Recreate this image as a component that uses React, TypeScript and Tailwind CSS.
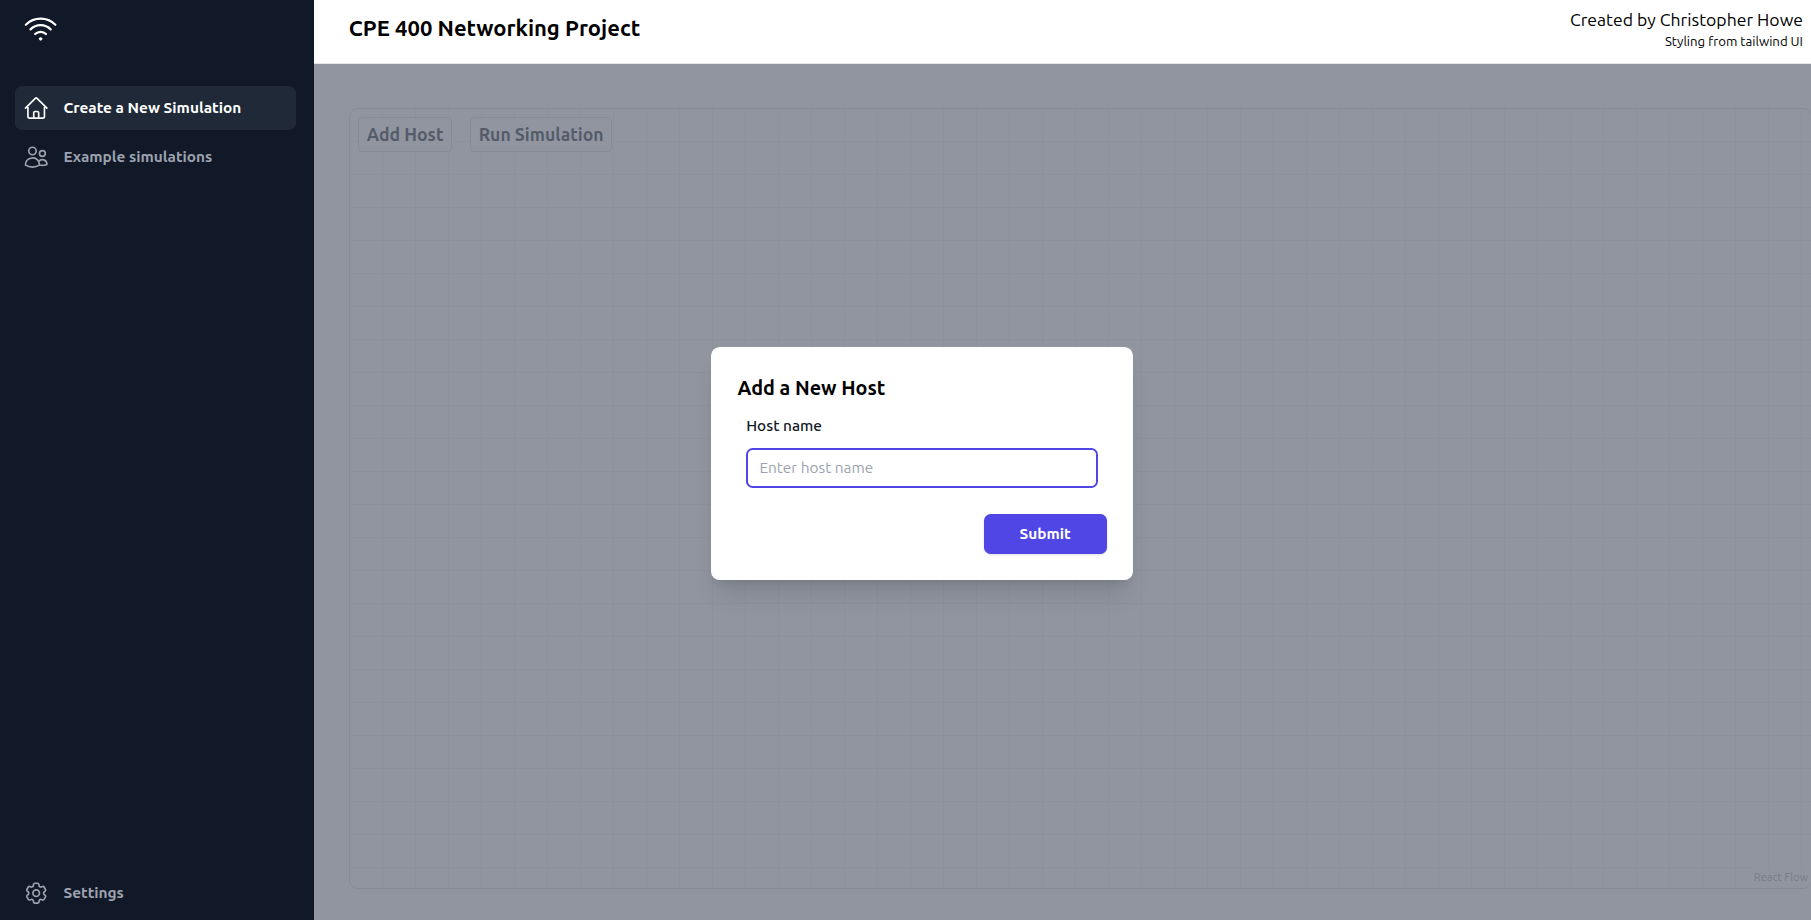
import type { ReactNode } from 'react';
import { HiOutlineWifi, HiOutlineHome, HiOutlineUsers, HiOutlineCog6Tooth } from 'react-icons/hi2';

function NavItem({ icon, label, active }: { icon: ReactNode; label: string; active?: boolean }) {
  return (
    <a
      className={
        'flex items-center gap-[14px] rounded-[6.6px] py-[8.8px] pl-2 text-[15.4px] leading-[26.4px] font-semibold ' +
        (active ? 'bg-[#1f2937] text-white' : 'text-[#9ca3af]')
      }
    >
      {icon}
      <span>{label}</span>
    </a>
  );
}

function Sidebar() {
  return (
    <nav className="flex w-[314px] shrink-0 flex-col bg-[#111827] pr-[18px] pl-[15px] pb-[4.4px]">
      <div className="flex h-[86px] items-start pt-[11.5px] pl-[8.2px]">
        <HiOutlineWifi className="size-[35.2px] text-white" />
      </div>
      <div className="flex flex-col gap-[4.8px]">
        <NavItem active label="Create a New Simulation" icon={<HiOutlineHome className="size-[26.4px]" />} />
        <NavItem label="Example simulations" icon={<HiOutlineUsers className="size-[26.4px]" />} />
      </div>
      <div className="mt-auto">
        <NavItem label="Settings" icon={<HiOutlineCog6Tooth className="size-[26.4px]" />} />
      </div>
    </nav>
  );
}

function Header() {
  return (
    <header className="flex h-16 shrink-0 items-center justify-between border-b border-[#e5e7eb] bg-white pr-2 pb-[7px] pl-[34.8px]">
      <h1 className="text-[22px] leading-[30.8px] font-semibold text-black">CPE 400 Networking Project</h1>
      <div className="pt-[1.6px] text-right text-black">
        <p className="text-[17.6px] leading-[26.4px]">Created by Christopher Howe</p>
        <p className="text-[13.2px] leading-[17.6px]">Styling from tailwind UI</p>
      </div>
    </header>
  );
}

function FlowButton({ children }: { children: ReactNode }) {
  return (
    <button className="rounded-[4.4px] border border-[#d1d5db] bg-white px-[7.8px] pt-[4px] pb-[2.6px] text-[17.6px] leading-[26.4px] font-semibold text-[#111827]">
      {children}
    </button>
  );
}

function FlowPanel() {
  return (
    <section className="flex flex-1 flex-col justify-between rounded-[8.8px] border border-[#d1d5db] bg-[linear-gradient(to_right,transparent_32px,#eee_32px),linear-gradient(to_bottom,transparent_32px,#eee_32px)] bg-[size:33px_33px]">
      <div className="flex gap-[17.6px] px-[8px] py-[7.8px]">
        <FlowButton>Add Host</FlowButton>
        <FlowButton>Run Simulation</FlowButton>
      </div>
      <span className="mb-px self-end bg-white/50 px-[3px] py-[2px] text-[11px] leading-[16.5px] text-[#999]">React Flow</span>
    </section>
  );
}

function HostDialog() {
  return (
    <form className="flex w-[422px] flex-col rounded-[8.8px] bg-white p-[26.4px] shadow-xl">
      <h2 className="text-[19.8px] leading-[30.8px] font-semibold text-black">Add a New Host</h2>
      <div className="flex flex-col gap-[8.8px] p-[8.8px]">
        <label htmlFor="host" className="text-[15.4px] leading-[26.4px] font-medium text-[#111827]">
          Host name
        </label>
        <input
          id="host"
          placeholder="Enter host name"
          className="w-full rounded-[6.6px] bg-white px-[13.2px] py-[6.6px] text-[15.4px] leading-[26.4px] ring-2 ring-[#4f46e5] outline-none ring-inset placeholder:text-[#9ca3af]"
        />
      </div>
      <button
        type="button"
        className="mt-[17.6px] w-[123px] self-end rounded-[6.6px] bg-[#4f46e5] py-[6.6px] text-[15.4px] leading-[26.4px] font-semibold text-white shadow-sm"
      >
        Submit
      </button>
    </form>
  );
}

export default function App() {
  return (
    <div className="flex h-[920px] w-full overflow-hidden bg-white font-[Ubuntu,'Open_Sans',sans-serif]">
      <Sidebar />
      <div className="flex min-w-0 flex-1 flex-col">
        <Header />
        <main className="relative flex flex-1 overflow-hidden bg-white">
          <div className="-mr-px flex flex-1 pt-[44px] pb-[31px] pl-[35px]">
            <FlowPanel />
          </div>
          <div className="absolute inset-0 flex justify-center bg-[#6b7280]/75 pr-[281px] pt-[283px]">
            <div>
              <HostDialog />
            </div>
          </div>
        </main>
      </div>
    </div>
  );
}
